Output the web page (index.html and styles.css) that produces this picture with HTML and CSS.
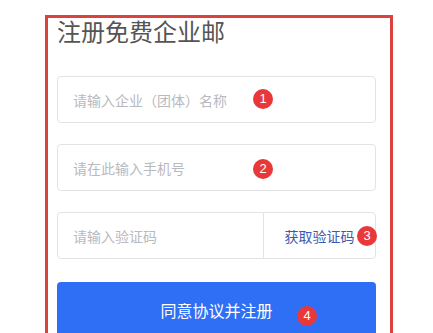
FILE: index.html
```html
<!DOCTYPE html>
<html lang="zh-CN">
<head>
<meta charset="utf-8">
<title>注册免费企业邮</title>
<link rel="stylesheet" href="styles.css">
</head>
<body>
<div class="panel">
  <h1 class="title">注册免费企业邮</h1>
  <div class="field">
    <span class="placeholder">请输入企业（团体）名称</span>
    <span class="badge badge-1">1</span>
  </div>
  <div class="field">
    <span class="placeholder">请在此输入手机号</span>
    <span class="badge badge-2">2</span>
  </div>
  <div class="field field-split">
    <span class="placeholder code-input">请输入验证码</span>
    <span class="code-btn">获取验证码</span>
    <span class="badge badge-3">3</span>
  </div>
  <div class="submit">
    同意协议并注册
    <span class="badge badge-4">4</span>
  </div>
</div>
</body>
</html>
```

FILE: styles.css
```css
html, body {
  margin: 0;
  padding: 0;
  background: #ffffff;
}
body {
  font-family: "Noto Sans CJK SC", "Noto Sans", sans-serif;
  width: 433px;
  height: 333px;
  overflow: hidden;
  position: relative;
}
.panel {
  position: relative;
  margin: 15px 0 0 45px;
  width: 348px;
  height: 340px;
  border: 3px solid #d9423f;
  border-bottom: none;
  padding: 0 14px 0 9px;
  box-sizing: border-box;
}
.title {
  margin: 0 0 33px 0;
  font-size: 24px;
  line-height: 25px;
  font-weight: 400;
  color: #555555;
}
.field {
  position: relative;
  height: 47px;
  border: 1px solid #e3e3e6;
  border-radius: 4px;
  box-sizing: border-box;
  display: flex;
  align-items: center;
  margin-bottom: 21px;
  padding-left: 15px;
}
.placeholder {
  font-size: 14px;
  color: #b9b9be;
}
.field-split {
  padding-left: 0;
  margin-bottom: 23px;
}
.code-input {
  flex: 0 0 206px;
  box-sizing: border-box;
  padding-left: 15px;
  height: 100%;
  display: flex;
  align-items: center;
  border-right: 1px solid #e3e3e6;
}
.code-btn {
  flex: 1;
  text-align: center;
  font-size: 14px;
  color: #3c5bb0;
}
.submit {
  position: relative;
  height: 56px;
  background: #2f6ff5;
  border-radius: 4px 4px 0 0;
  color: #ffffff;
  font-size: 16px;
  display: flex;
  align-items: center;
  justify-content: center;
}
.badge {
  position: absolute;
  width: 20px;
  height: 20px;
  border-radius: 50%;
  background: #e8383a;
  color: #ffffff;
  font-family: "Liberation Sans", Arial, sans-serif;
  font-size: 13px;
  line-height: 20px;
  text-align: center;
}
.badge-1 { left: 195px; top: 12px; }
.badge-2 { left: 195px; top: 14px; }
.badge-3 { left: 299px; top: 13px; }
.badge-4 { left: 240px; top: 24px; }
```
